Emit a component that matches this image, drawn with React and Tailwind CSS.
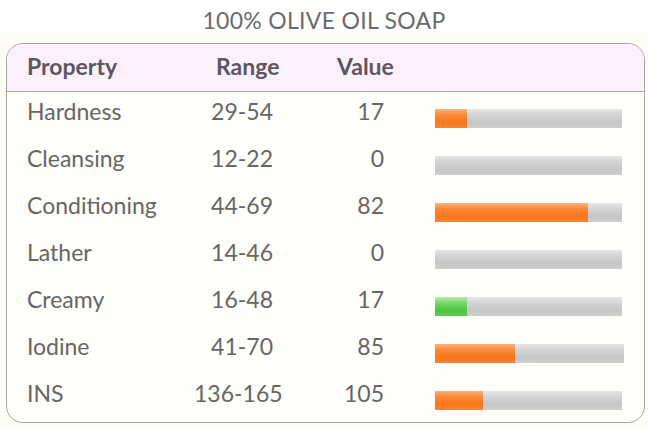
import React from "react";

const rows = [
  { name: "Hardness", range: "29-54", value: "17", fill: 32, color: "orange", w: 187 },
  { name: "Cleansing", range: "12-22", value: "0", fill: 0, color: "orange", w: 187 },
  { name: "Conditioning", range: "44-69", value: "82", fill: 153, color: "orange", w: 187 },
  { name: "Lather", range: "14-46", value: "0", fill: 0, color: "orange", w: 187 },
  { name: "Creamy", range: "16-48", value: "17", fill: 32, color: "green", w: 187 },
  { name: "Iodine", range: "41-70", value: "85", fill: 80, color: "orange", w: 189 },
  { name: "INS", range: "136-165", value: "105", fill: 48, color: "orange", w: 187 },
];

function Bar({ fill, color, w }) {
  return (
    <div
      className="h-[19px] bg-[linear-gradient(to_bottom,#e6e6e6_0%,#d4d4d4_30%,#c6c6c6_70%,#cfcfcf_100%)] flex"
      style={{ width: w }}
    >
      {fill > 0 && (
        <div
          className={
            color === "green"
              ? "h-full bg-[linear-gradient(to_bottom,#b8ecae_0%,#78d86a_30%,#4cc53f_70%,#5ccc50_100%)]"
              : "h-full bg-[linear-gradient(to_bottom,#fcb27c_0%,#fb8a3a_30%,#f7761b_70%,#f98434_100%)]"
          }
          style={{ width: fill }}
        />
      )}
    </div>
  );
}

export default function App() {
  return (
    <div className="w-[648px] h-[427px] bg-[#fdfdf6] font-['Lato',sans-serif] text-[#666666]">
      <div className="h-[33px] bg-white flex justify-center">
        <div className="pt-[7px] text-[23px] leading-[26px] text-[#6a6a6a] tracking-[0.3px] whitespace-nowrap">100% OLIVE OIL SOAP</div>
      </div>
      <div className="h-[10px]" />
      <div className="mx-[6px] w-[639px] h-[380px] border border-[#a8a6a2] rounded-[17px] overflow-hidden bg-[#fefefa]">
        <div className="h-[48px] bg-[#fcf0fc] border-b border-[#a9a7a5] flex items-center pl-[20px] font-bold text-[#5c5660] text-[23px] pb-[2px] whitespace-nowrap">
          <span className="w-[189px] shrink-0">Property</span>
          <span className="w-[121px] shrink-0">Range</span>
          <span>Value</span>
        </div>
        {rows.map((r) => (
          <div key={r.name} className="h-[47px] flex items-center pl-[20px] text-[23px] whitespace-nowrap">
            <span className="w-[167px] shrink-0 pb-[8px]">{r.name}</span>
            <span className="w-[79px] shrink-0 text-right pb-[8px]">{r.range}</span>
            <span className="w-[111px] shrink-0 text-right pb-[8px]">{r.value}</span>
            <div className="ml-[51px] pt-[5px] shrink-0">
              <Bar fill={r.fill} color={r.color} w={r.w} />
            </div>
          </div>
        ))}
      </div>
    </div>
  );
}
